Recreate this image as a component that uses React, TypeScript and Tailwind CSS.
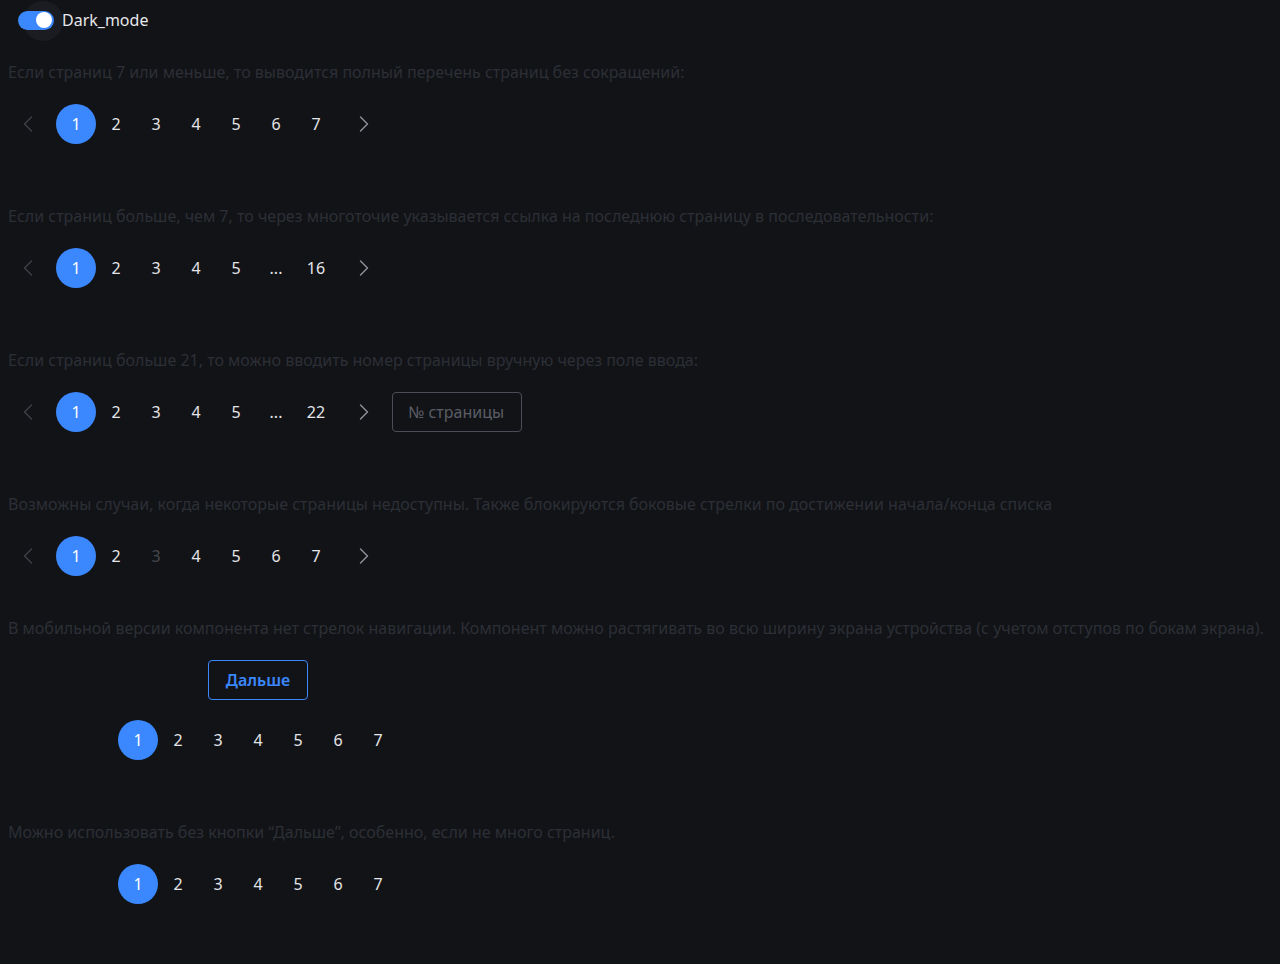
import { ChevronLeft, ChevronRight } from 'lucide-react'

type Item = number | '...'

interface PagerProps {
  items: Item[]
  disabled?: number[]
}

function PageItems({ items, disabled = [] }: { items: Item[]; disabled?: number[] }) {
  return (
    <>
      {items.map((it, i) => {
        if (it === '...') {
          return (
            <span key={i} className="w-10 h-10 flex items-center justify-center text-[#e4e5e8]">
              ...
            </span>
          )
        }
        const active = it === 1
        const off = disabled.includes(it)
        return (
          <span
            key={i}
            className={
              'w-10 h-10 rounded-full flex items-center justify-center ' +
              (active ? 'bg-[#3b87fd] text-white' : off ? 'text-[#454850]' : 'text-[#e4e5e8]')
            }
          >
            {it}
          </span>
        )
      })}
    </>
  )
}

function Pager({ items, disabled }: PagerProps) {
  return (
    <div className="flex items-center gap-2">
      <span className="w-10 h-10 flex items-center justify-center text-[#3d4048]">
        <ChevronLeft size={28} strokeWidth={1.2} />
      </span>
      <div className="flex">
        <PageItems items={items} disabled={disabled} />
      </div>
      <span className="w-10 h-10 flex items-center justify-center text-[#8d919a]">
        <ChevronRight size={28} strokeWidth={1.2} />
      </span>
    </div>
  )
}

function Desc({ children }: { children: React.ReactNode }) {
  return <p className="h-6 leading-6 text-[#2c2f36]">{children}</p>
}

const seven: Item[] = [1, 2, 3, 4, 5, 6, 7]

export default function App() {
  return (
    <div className="min-h-[964px] bg-[#121317] text-base font-['Noto_Sans',sans-serif]">
      <div className="flex items-center h-10 pl-[18px]">
        <div className="relative w-9 h-[19px]">
          <span className="absolute left-[5px] top-[-10px] w-10 h-10 rounded-full bg-[#1b1c21]" />
          <span className="absolute inset-0 rounded-full bg-[#3b87fd]" />
          <span className="absolute left-[18px] top-[1.5px] w-4 h-4 rounded-full bg-white" />
        </div>
        <span className="ml-2 text-[#e6e7ea]">Dark_mode</span>
      </div>

      <div className="pl-2 pt-5">
        <Desc>Если страниц 7 или меньше, то выводится полный перечень страниц без сокращений:</Desc>
        <div className="mt-5">
          <Pager items={seven} />
        </div>

        <div className="mt-[60px]">
          <Desc>Если страниц больше, чем 7, то через многоточие указывается ссылка на последнюю страницу в последовательности:</Desc>
        </div>
        <div className="mt-5">
          <Pager items={[1, 2, 3, 4, 5, '...', 16]} />
        </div>

        <div className="mt-[60px]">
          <Desc>Если страниц больше 21, то можно вводить номер страницы вручную через поле ввода:</Desc>
        </div>
        <div className="mt-5 flex items-center gap-2">
          <Pager items={[1, 2, 3, 4, 5, '...', 22]} />
          <input
            placeholder="№ страницы"
            className="w-[130px] h-10 px-[15px] rounded border border-[#4b4e56] bg-transparent text-base text-[#e4e5e8] placeholder:text-[#5a5d65] outline-none"
          />
        </div>

        <div className="mt-[60px]">
          <Desc>Возможны случаи, когда некоторые страницы недоступны. Также блокируются боковые стрелки по достижении начала/конца списка</Desc>
        </div>
        <div className="mt-5">
          <Pager items={seven} disabled={[3]} />
        </div>

        <div className="mt-10">
          <Desc>В мобильной версии компонента нет стрелок навигации. Компонент можно растягивать во всю ширину экрана устройства (с учетом отступов по бокам экрана).</Desc>
        </div>
        <div className="w-[500px] mt-5 flex flex-col items-center gap-5">
          <button className="w-[100px] h-10 rounded border border-[#3b87fd] text-[#3b87fd] font-semibold">
            Дальше
          </button>
          <div className="flex">
            <PageItems items={seven} />
          </div>
        </div>

        <div className="mt-[60px]">
          <Desc>Можно использовать без кнопки “Дальше”, особенно, если не много страниц.</Desc>
        </div>
        <div className="w-[500px] mt-5 flex justify-center">
          <PageItems items={seven} />
        </div>
      </div>
    </div>
  )
}
